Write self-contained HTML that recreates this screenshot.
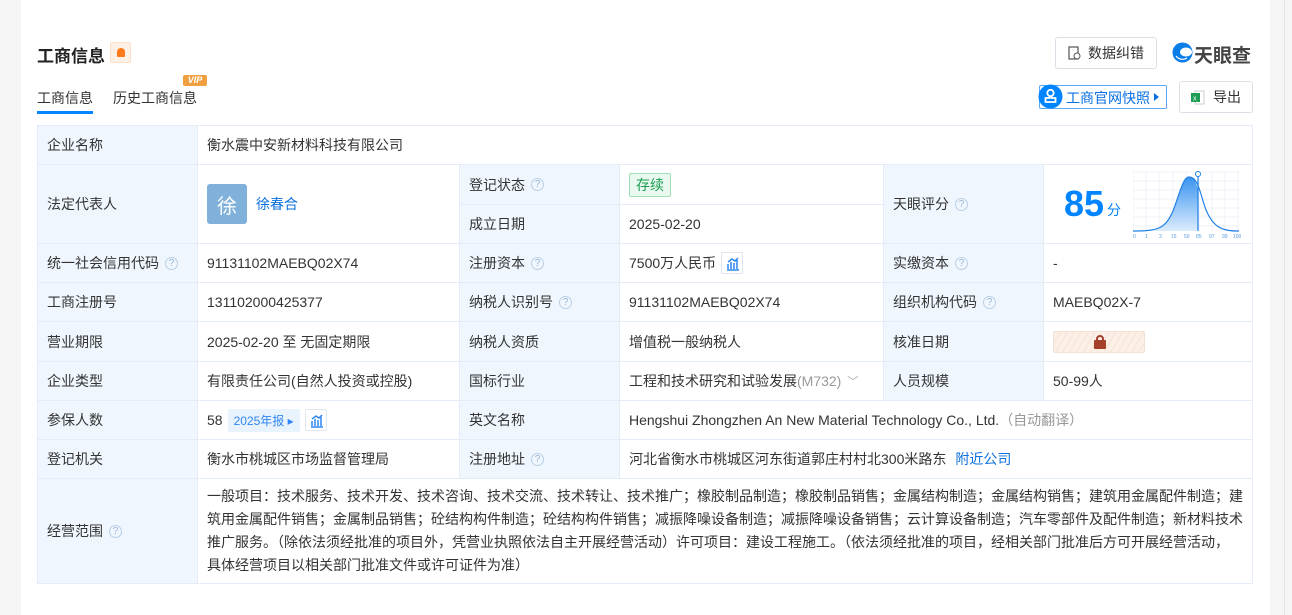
<!DOCTYPE html>
<html><head><meta charset="utf-8"><style>
*{margin:0;padding:0;box-sizing:border-box}
body{width:1292px;height:615px;overflow:hidden;background:#f5f5f5;font-family:"Liberation Sans","Noto Sans CJK SC",sans-serif;font-size:14px;color:#333;position:relative}
.card{position:absolute;left:21px;top:0;width:1249px;height:615px;background:#fff}
.a{position:absolute}
.c{position:absolute;border-right:1px solid #e4edf7;border-bottom:1px solid #e4edf7;display:flex;align-items:center;padding-left:9px;white-space:nowrap}
.l{background:#eff6fd}
.q{display:inline-block;width:13px;height:13px;border:1px solid #b9cfe6;border-radius:50%;color:#9bb6d4;font-size:10px;line-height:11px;text-align:center;margin-left:6px}
.chart{display:inline-block;width:22px;height:22px;border:1px solid #dfe6ee;border-radius:2px;margin-left:5px;position:relative}
.btn{position:absolute;border:1px solid #dcdfe6;border-radius:3px;display:flex;align-items:center;justify-content:center;font-size:14px;color:#333}
</style></head><body>
<div class="card"></div>
<div class="a" style="left:1284px;top:0;width:1px;height:615px;background:#e4e4e4"></div>
<div class="a" style="left:37px;top:42px;font-size:17px;font-weight:bold;color:#222">工商信息</div>
<div class="a" style="left:110px;top:42px;width:21px;height:21px;background:#fff0e6;border:1px solid #fde0cc;border-radius:2px"><div style="position:absolute;left:6px;top:5px;width:8px;height:9px;background:#ff7a1a;border-radius:4px 4px 1px 1px"></div></div>
<div class="a" style="left:37px;top:88px;color:#333">工商信息</div>
<div class="a" style="left:37px;top:111px;width:56px;height:3px;background:#0084ff"></div>
<div class="a" style="left:113px;top:88px;color:#333">历史工商信息</div>
<div class="a" style="left:183px;top:75px;width:24px;height:11px;background:#f0a040;border-radius:2px;color:#fff;font-size:9px;font-weight:bold;font-style:italic;line-height:11px;text-align:center">VIP</div>
<div class="btn" style="left:1055px;top:37px;width:102px;height:32px">
<svg width="13" height="14" style="margin-right:7px"><rect x="1" y="1" width="9" height="12" fill="none" stroke="#555" stroke-width="1.2"/><circle cx="9" cy="10" r="3" fill="#fff" stroke="#555"/></svg>数据纠错</div>
<svg class="a" style="left:1172px;top:42px" width="21" height="21" viewBox="0 0 21 21"><circle cx="10.5" cy="10.5" r="10" fill="#0a7ee6"/><ellipse cx="14" cy="10" rx="6" ry="4.5" fill="#fff"/><path d="M4 14C7 18 12 18 15 16" stroke="#fff" stroke-width="1.2" fill="none"/></svg>
<div class="a" style="left:1194px;top:41px;font-size:19px;font-weight:bold;color:#444">天眼查</div>
<div class="a" style="left:1039px;top:85px;width:128px;height:24px;border:1px solid #5aa7f5;border-radius:2px;background:#fff"></div>
<svg class="a" style="left:1038px;top:84px" width="25" height="25" viewBox="0 0 25 25"><circle cx="12.5" cy="12.5" r="12" fill="#0084ff"/><circle cx="12.5" cy="9" r="3.2" fill="none" stroke="#fff" stroke-width="1.8"/><path d="M11.5 12V14H7.5V18H17.5V14H13.5V12" fill="none" stroke="#fff" stroke-width="1.8"/></svg>
<div class="a" style="left:1066px;top:88px;color:#0a6fe0;font-size:14px">工商官网快照</div>
<div class="a" style="left:1154px;top:93px;border-left:5px solid #0a6fe0;border-top:4px solid transparent;border-bottom:4px solid transparent"></div>
<div class="btn" style="left:1179px;top:81px;width:74px;height:32px"><svg width="14" height="15" style="margin-right:8px"><rect x="4" y="1" width="9" height="13" fill="#fff" stroke="#ccc"/><rect x="0" y="3" width="9" height="9" fill="#1f9d55"/><text x="2" y="10.5" font-size="7" fill="#fff" font-family="Liberation Sans">x</text></svg>导出</div>

<div class="a" style="left:37px;top:125px;width:1216px;height:459px;border-left:1px solid #e4edf7;border-top:1px solid #e4edf7"></div>
<div class="c l" style="left:38px;top:126px;width:160px;height:39px">企业名称</div>
<div class="c" style="left:198px;top:126px;width:1055px;height:39px">衡水震中安新材料科技有限公司</div>
<div class="c l" style="left:38px;top:165px;width:160px;height:79px">法定代表人</div>
<div class="c" style="left:198px;top:165px;width:262px;height:79px"><span style="width:40px;height:40px;background:#7fb1da;border-radius:3px;color:#fff;font-size:20px;display:flex;align-items:center;justify-content:center">徐</span><span style="color:#0a6fe0;margin-left:9px">徐春合</span></div>
<div class="c l" style="left:460px;top:165px;width:160px;height:40px">登记状态<span class="q">?</span></div>
<div class="c" style="left:620px;top:165px;width:264px;height:40px"><span style="border:1px solid #9fe0b8;background:#e9f9ef;color:#1a9f52;padding:1px 6px;border-radius:2px">存续</span></div>
<div class="c l" style="left:460px;top:205px;width:160px;height:39px">成立日期</div>
<div class="c" style="left:620px;top:205px;width:264px;height:39px">2025-02-20</div>
<div class="c l" style="left:884px;top:165px;width:160px;height:79px">天眼评分<span class="q">?</span></div>
<div class="c" style="left:1044px;top:165px;width:209px;height:79px;padding-left:20px">
<span style="font-size:36px;font-weight:bold;color:#0084ff">85</span><span style="color:#0084ff;font-size:14px;margin:12px 0 0 3px">分</span>
<svg width="108" height="68" style="position:absolute;left:89px;top:6px" viewBox="0 0 108 68"><g stroke="#e6edf5" stroke-width="0.7"><path d="M0 1H106M0 10H106M0 19H106M0 28H106M0 37H106M0 46H106M0 55H106M0 1V60M13 1V60M26 1V60M40 1V60M53 1V60M66 1V60M79 1V60M92 1V60M105 1V60"/></g><defs><linearGradient id="g" x1="0" y1="0" x2="0" y2="1"><stop offset="0" stop-color="#3a94f0"/><stop offset="1" stop-color="#dcecfd"/></linearGradient></defs><path d="M0 60C25 60 32 58 40 40C47 22 50 6 56 6C61 6 63 10 65 20L65 60Z" fill="url(#g)"/><path d="M0 60C25 60 32 58 40 40C47 22 50 6 56 6C62 6 65 12 70 30C78 58 90 60 106 60" fill="none" stroke="#1f80e8" stroke-width="1.2"/><path d="M65 4V60" stroke="#1f80e8" stroke-width="1.2"/><circle cx="65" cy="3" r="2.5" fill="#fff" stroke="#1f80e8"/><g font-size="5" fill="#5a9be0" font-family="Liberation Sans"><text x="0" y="67">0</text><text x="12" y="67">1</text><text x="26" y="67">3</text><text x="38" y="67">15</text><text x="51" y="67">50</text><text x="63" y="67">85</text><text x="76" y="67">97</text><text x="89" y="67">99</text><text x="100" y="67">100</text></g></svg></div>
<div class="c l" style="left:38px;top:244px;width:160px;height:39px">统一社会信用代码<span class="q">?</span></div>
<div class="c" style="left:198px;top:244px;width:262px;height:39px">91131102MAEBQ02X74</div>
<div class="c l" style="left:460px;top:244px;width:160px;height:39px">注册资本<span class="q">?</span></div>
<div class="c" style="left:620px;top:244px;width:264px;height:39px">7500万人民币<span class="chart"><svg width="20" height="20" style="position:absolute;left:1px;top:1px"><path d="M5 15V10M8 15V8M11 15V9M14 15V6M4 16H16M5 8L9 5L12 7L15 4" stroke="#2f86f0" stroke-width="1.5" fill="none"/></svg></span></div>
<div class="c l" style="left:884px;top:244px;width:160px;height:39px">实缴资本<span class="q">?</span></div>
<div class="c" style="left:1044px;top:244px;width:209px;height:39px">-</div>
<div class="c l" style="left:38px;top:283px;width:160px;height:39px">工商注册号</div>
<div class="c" style="left:198px;top:283px;width:262px;height:39px">131102000425377</div>
<div class="c l" style="left:460px;top:283px;width:160px;height:39px">纳税人识别号<span class="q">?</span></div>
<div class="c" style="left:620px;top:283px;width:264px;height:39px">91131102MAEBQ02X74</div>
<div class="c l" style="left:884px;top:283px;width:160px;height:39px">组织机构代码<span class="q">?</span></div>
<div class="c" style="left:1044px;top:283px;width:209px;height:39px">MAEBQ02X-7</div>
<div class="c l" style="left:38px;top:322px;width:160px;height:40px">营业期限</div>
<div class="c" style="left:198px;top:322px;width:262px;height:40px">2025-02-20 至 无固定期限</div>
<div class="c l" style="left:460px;top:322px;width:160px;height:40px">纳税人资质</div>
<div class="c" style="left:620px;top:322px;width:264px;height:40px">增值税一般纳税人</div>
<div class="c l" style="left:884px;top:322px;width:160px;height:40px">核准日期</div>
<div class="c" style="left:1044px;top:322px;width:209px;height:40px"><span style="width:92px;height:22px;background:repeating-linear-gradient(120deg,#fbefe6 0 5px,#f6e3d6 5px 6px);border:1px solid #f2e2d5;border-radius:2px;position:relative"><span style="position:absolute;left:40px;top:8px;width:12px;height:9px;background:#a5402a;border-radius:1px"></span><span style="position:absolute;left:42px;top:3px;width:8px;height:8px;border:2px solid #a5402a;border-radius:4px 4px 0 0"></span></span></div>
<div class="c l" style="left:38px;top:362px;width:160px;height:39px">企业类型</div>
<div class="c" style="left:198px;top:362px;width:262px;height:39px">有限责任公司(自然人投资或控股)</div>
<div class="c l" style="left:460px;top:362px;width:160px;height:39px">国标行业</div>
<div class="c" style="left:620px;top:362px;width:264px;height:39px">工程和技术研究和试验发展<span style="color:#999">(M732)</span><span style="color:#aaa;margin-left:6px;font-size:11px">﹀</span></div>
<div class="c l" style="left:884px;top:362px;width:160px;height:39px">人员规模</div>
<div class="c" style="left:1044px;top:362px;width:209px;height:39px">50-99人</div>
<div class="c l" style="left:38px;top:401px;width:160px;height:39px">参保人数</div>
<div class="c" style="left:198px;top:401px;width:262px;height:39px">58<span style="background:#e9f3fe;color:#2f86f0;font-size:12px;padding:3px 6px;margin-left:5px;border-radius:2px">2025年报 ▸</span><span class="chart"><svg width="20" height="20" style="position:absolute;left:1px;top:1px"><path d="M5 15V10M8 15V8M11 15V9M14 15V6M4 16H16M5 8L9 5L12 7L15 4" stroke="#2f86f0" stroke-width="1.5" fill="none"/></svg></span></div>
<div class="c l" style="left:460px;top:401px;width:160px;height:39px">英文名称</div>
<div class="c" style="left:620px;top:401px;width:633px;height:39px">Hengshui Zhongzhen An New Material Technology Co., Ltd.<span style="color:#999">（自动翻译）</span></div>
<div class="c l" style="left:38px;top:440px;width:160px;height:39px">登记机关</div>
<div class="c" style="left:198px;top:440px;width:262px;height:39px">衡水市桃城区市场监督管理局</div>
<div class="c l" style="left:460px;top:440px;width:160px;height:39px">注册地址<span class="q">?</span></div>
<div class="c" style="left:620px;top:440px;width:633px;height:39px">河北省衡水市桃城区河东街道郭庄村村北300米路东<span style="color:#0a6fe0;margin-left:9px">附近公司</span></div>
<div class="c l" style="left:38px;top:479px;width:160px;height:105px">经营范围<span class="q">?</span></div>
<div class="c" style="left:198px;top:479px;width:1055px;height:105px;line-height:23px;white-space:nowrap;align-items:center">
<div>一般项目：技术服务、技术开发、技术咨询、技术交流、技术转让、技术推广；橡胶制品制造；橡胶制品销售；金属结构制造；金属结构销售；建筑用金属配件制造；建<br>筑用金属配件销售；金属制品销售；砼结构构件制造；砼结构构件销售；减振降噪设备制造；减振降噪设备销售；云计算设备制造；汽车零部件及配件制造；新材料技术<br>推广服务。（除依法须经批准的项目外，凭营业执照依法自主开展经营活动）许可项目：建设工程施工。（依法须经批准的项目，经相关部门批准后方可开展经营活动，<br>具体经营项目以相关部门批准文件或许可证件为准）</div></div>
</body></html>
